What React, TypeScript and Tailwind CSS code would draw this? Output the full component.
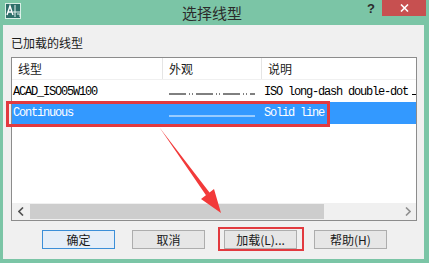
import React from 'react'

const cjk = { fontFamily: '"Noto Sans CJK SC", "Noto Sans", sans-serif' }
const mono = { fontFamily: '"Liberation Mono", "Noto Sans CJK SC", monospace' }

function AppIcon() {
  return (
    <svg width="16" height="16" viewBox="0 0 16 16">
      <rect x="0.5" y="0.5" width="15" height="15" fill="#2f6f6a" stroke="#d8efe6" />
      <path d="M2 12 L5 3 L8 12 M3.2 9 H6.8" stroke="#ffffff" strokeWidth="1.4" fill="none" />
      <path d="M10 2 V14 M8 9 H15 M12 11 H15 V14" stroke="#e8f5f0" strokeWidth="1" fill="none" />
    </svg>
  )
}

function Btn({ label, primary }: { label: string; primary?: boolean }) {
  return (
    <div
      className={
        'w-[73px] h-[19px] flex items-center justify-center text-[12px] text-[#1a1a1a] border ' +
        (primary ? 'border-[#3c8fd8] bg-[#e5eef8]' : 'border-[#adadad] bg-[#e6e6e6]')
      }
      style={cjk}
    >
      {label}
    </div>
  )
}

export default function App() {
  return (
    <div className="relative w-[429px] h-[263px] bg-[#7bc5a6] flex flex-col overflow-hidden">
      {/* title bar */}
      <div className="h-[25px] flex items-start shrink-0">
        <div className="pl-[5px] pt-[3px]">
          <AppIcon />
        </div>
        <div className="flex-1 text-center text-[15px] text-[#2b2b2b] leading-[25px] pl-[36px]" style={cjk}>
          选择线型
        </div>
        <div className="w-[16px] text-[13px] font-bold text-[#2b2b2b] leading-[15px] pt-[1px]" style={{ fontFamily: '"Liberation Sans", sans-serif' }}>
          ?
        </div>
        <div className="w-[44px] h-[16px] ml-[-1px] bg-[#c75050] flex items-center justify-center">
          <svg width="9" height="8" viewBox="0 0 9 8">
            <path d="M1 0.5 L8 7.5 M8 0.5 L1 7.5" stroke="#ffffff" strokeWidth="1.6" />
          </svg>
        </div>
        <div className="w-[3px]" />
      </div>

      {/* client area */}
      <div className="ml-[3px] mr-[5px] mb-[4px] flex-1 bg-[#f0f0f0] flex flex-col px-[8px] pt-[10px]">
        <div className="text-[12px] text-[#1a1a1a] leading-[16px] h-[22px]" style={cjk}>
          已加载的线型
        </div>

        {/* list view */}
        <div className="w-[406px] h-[164px] border border-[#8c8c8c] bg-white flex flex-col">
          <div className="h-[22px] flex text-[12px] text-[#1a1a1a] border-b border-[#f0f0f0]" style={cjk}>
            <div className="w-[151px] pl-[6px] leading-[22px] border-r border-[#e5e5e5]">线型</div>
            <div className="w-[99px] pl-[6px] leading-[22px] border-r border-[#e5e5e5]">外观</div>
            <div className="flex-1 pl-[6px] leading-[22px]">说明</div>
          </div>

          <div className="h-[22px] flex items-center text-[12px] text-black tracking-[-1.2px] whitespace-nowrap overflow-hidden pt-[2px]" style={mono}>
            <div className="w-[151px] pl-[1px]">ACAD_ISO05W100</div>
            <div className="w-[99px] flex pl-[6px] pt-[4px]">
              <svg width="86" height="4" viewBox="0 0 86 4">
                <line x1="0" y1="2" x2="86" y2="2" stroke="#000" strokeWidth="1" strokeDasharray="17 3 1 2 1 3" />
              </svg>
            </div>
            <div className="w-[150px] pl-[2px] overflow-hidden">ISO long-dash double-dot</div>
            <div className="flex-1 h-[8px] border-b border-black mb-[2px]" />
          </div>

          <div className="h-[22px] flex items-center text-[12px] text-white bg-[#3399ff] tracking-[-1.2px] whitespace-nowrap" style={mono}>
            <div className="w-[151px] pl-[1px]">Continuous</div>
            <div className="w-[99px] flex pl-[6px] pt-[5px]">
              <svg width="86" height="4" viewBox="0 0 86 4">
                <line x1="0" y1="2" x2="86" y2="2" stroke="#ffffff" strokeWidth="1" />
              </svg>
            </div>
            <div className="flex-1 pl-[2px]">Solid line</div>
          </div>

          <div className="flex-1" />

          {/* horizontal scrollbar */}
          <div className="h-[17px] flex bg-[#f0f0f0]">
            <div className="w-[18px] flex items-center justify-center">
              <svg width="6" height="9" viewBox="0 0 6 9">
                <path d="M5 0.5 L1 4.5 L5 8.5" stroke="#505050" strokeWidth="1.6" fill="none" />
              </svg>
            </div>
            <div className="w-[294px] my-[1px] bg-[#cdcdcd]" />
            <div className="flex-1" />
            <div className="w-[17px] flex items-center justify-center">
              <svg width="6" height="9" viewBox="0 0 6 9">
                <path d="M1 0.5 L5 4.5 L1 8.5" stroke="#909090" strokeWidth="1.6" fill="none" />
              </svg>
            </div>
          </div>
        </div>

        {/* buttons */}
        <div className="flex pt-[9px] pl-[31px] gap-[17px]">
          <Btn label="确定" primary />
          <Btn label="取消" />
          <div className="ml-[2px]">
            <Btn label="加载(L)..." />
          </div>
          <Btn label="帮助(H)" />
        </div>
      </div>

      {/* annotations */}
      <div className="absolute left-[6px] top-[101px] w-[324px] h-[26px] border-[3px] border-[#e23a3f]" />
      <div className="absolute left-[218px] top-[227px] w-[86px] h-[24px] border-[2px] border-[#e23a3f]" />
      <svg className="absolute left-0 top-0" width="429" height="263" viewBox="0 0 429 263">
        <path d="M159.5 127.5 L209.5 192.5 L201 199 L221 213 L214 189 L206 195.2 Z" fill="#f23a3a" />
      </svg>
    </div>
  )
}
